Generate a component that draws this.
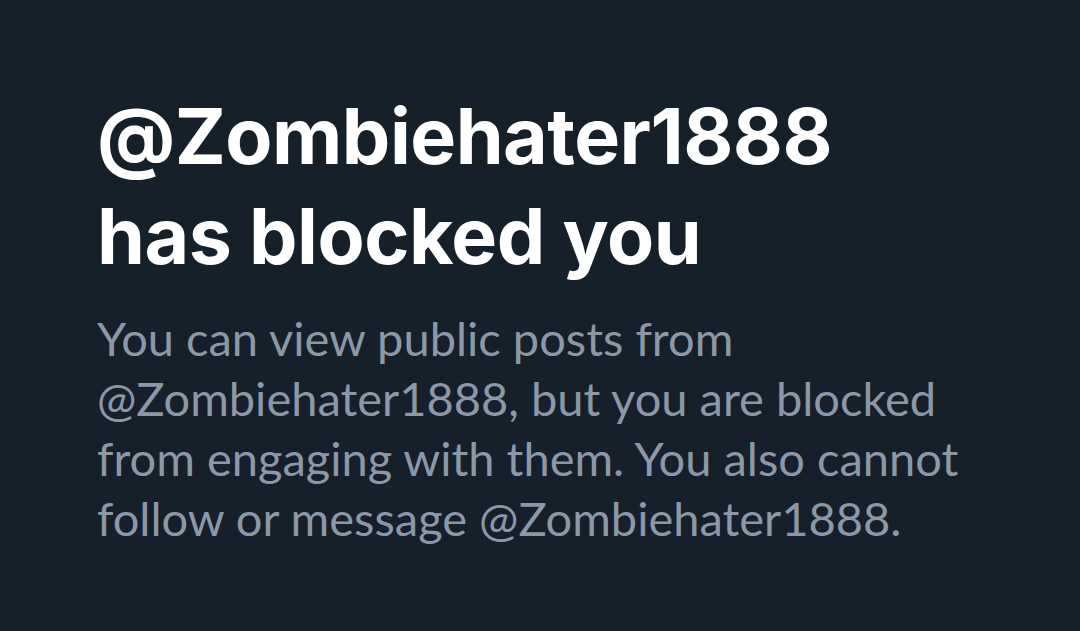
export default function App() {
  return (
    <div className="min-h-[631px] w-[1080px] bg-[#15202b] px-[97px] pt-[86px]">
      <h1 className="font-['Inter','Liberation_Sans',sans-serif] text-[77px] font-bold leading-[100px] tracking-[-0.5px] text-white">
        @Zombiehater1888
        <br />
        has blocked you
      </h1>
      <p className="mt-[22px] max-w-[900px] font-['Lato','Liberation_Sans',sans-serif] text-[47px] leading-[60px] text-[#8b98a5]">
        You can view public posts from @Zombiehater1888, but you are blocked from engaging with them. You also cannot
        follow or message @Zombiehater1888.
      </p>
    </div>
  )
}
